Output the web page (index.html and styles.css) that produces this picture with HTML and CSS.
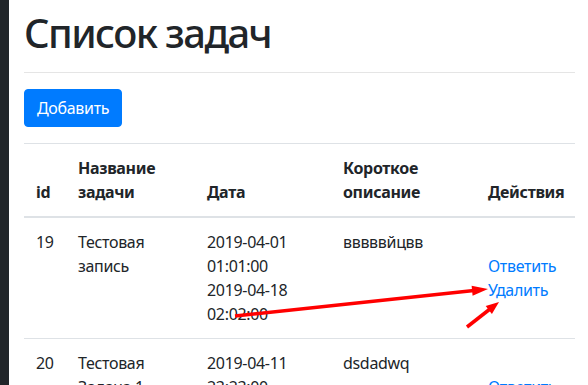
FILE: index.html
```html
<!DOCTYPE html>
<html lang="ru">
<head>
	<meta charset="UTF-8">
	<title>Список задач</title>
	<link rel="stylesheet" href="styles.css">
</head>
<body>
	<div class="page">
		<div class="sidebar"></div> <!-- тёмная полоса слева -->
		<div class="content">
			<h1 class="title">Список задач</h1>
			<hr class="divider">
			<a class="btn" href="#">Добавить</a>
			<table class="tasks">
				<thead>
					<tr>
						<th class="col-id">id</th>
						<th class="col-name">Название задачи</th>
						<th class="col-date">Дата</th>
						<th class="col-desc">Короткое описание</th>
						<th class="col-actions">Действия</th>
					</tr>
				</thead>
				<tbody>
					<tr>
						<td>19</td>
						<td>Тестовая запись</td>
						<td>2019-04-01<br>01:01:00<br>2019-04-18<br>02:02:00</td>
						<td>вввввйцвв</td>
						<td class="actions">
							<a href="#">Ответить</a>
							<a href="#">Удалить</a>
						</td>
					</tr>
					<tr>
						<td>20</td>
						<td>Тестовая Задача 1</td>
						<td>2019-04-11<br>23:23:00<br>2019-04-12<br>00:00:00</td>
						<td>dsdadwq</td>
						<td class="actions">
							<a href="#">Ответить</a>
							<a href="#">Удалить</a>
						</td>
					</tr>
				</tbody>
			</table>
		</div>
	</div>
	<!-- красные стрелки поверх скриншота -->
	<svg class="arrows" width="588" height="385">
		<line x1="235" y1="316" x2="474" y2="290.5" />
		<polygon points="488,289 472.6,295.7 471.6,285.7" />
		<line x1="467" y1="327" x2="490" y2="309" />
		<polygon points="499,302 491.9,313.9 485.7,306.1" />
	</svg>
</body>
</html>
```

FILE: styles.css
```css
body {
	margin: 0;
	font-family: "Noto Sans", "Open Sans", sans-serif;
	font-size: 16px;
	line-height: 1.5;
	letter-spacing: -0.02em;
	color: #212529;
	background: #fff;
}

.page {
	display: flex;
	height: 385px;
	overflow: hidden;
}

.sidebar { /*тёмная полоса*/
	width: 9px;
	flex: none;
	background: #212529;
}

.content {
	flex: 1;
	padding: 9px 13px 0 15px;
}

.title {
	margin: 0;
	font-size: 40px;
	font-weight: 500;
	line-height: 48px;
	letter-spacing: -0.04em;
}

.divider {
	margin: 15px 0 16px;
	border: 0;
	border-top: 1px solid rgba(0, 0, 0, .1);
}

.btn { /*синяя кнопка*/
	display: inline-block;
	padding: 6px 12px;
	border: 1px solid #007bff;
	border-radius: 4px;
	background: #007bff;
	color: #fff;
	text-decoration: none;
	vertical-align: top;
}

.tasks {
	width: 551px;
	margin-top: 16px;
	border-collapse: collapse;
	table-layout: fixed;
}

.tasks th,
.tasks td {
	padding: 12px;
	text-align: left;
	vertical-align: top;
	border-top: 1px solid #dee2e6;
}

.tasks th {
	vertical-align: bottom;
	border-bottom: 2px solid #dee2e6;
	font-weight: 700;
}

.col-id { width: 18px; }
.col-name { width: 105px; }
.col-date { width: 112px; }
.col-desc { width: 121px; }
.col-actions { width: 75px; }

.tasks .actions {
	vertical-align: middle;
}

.actions a {
	display: block;
	color: #007bff;
	text-decoration: none;
}

.arrows { /*аннотация*/
	position: absolute;
	left: 0;
	top: 0;
	pointer-events: none;
}

.arrows line {
	stroke: #f00;
	stroke-width: 3.5px;
}

.arrows polygon {
	fill: #f00;
}
```
